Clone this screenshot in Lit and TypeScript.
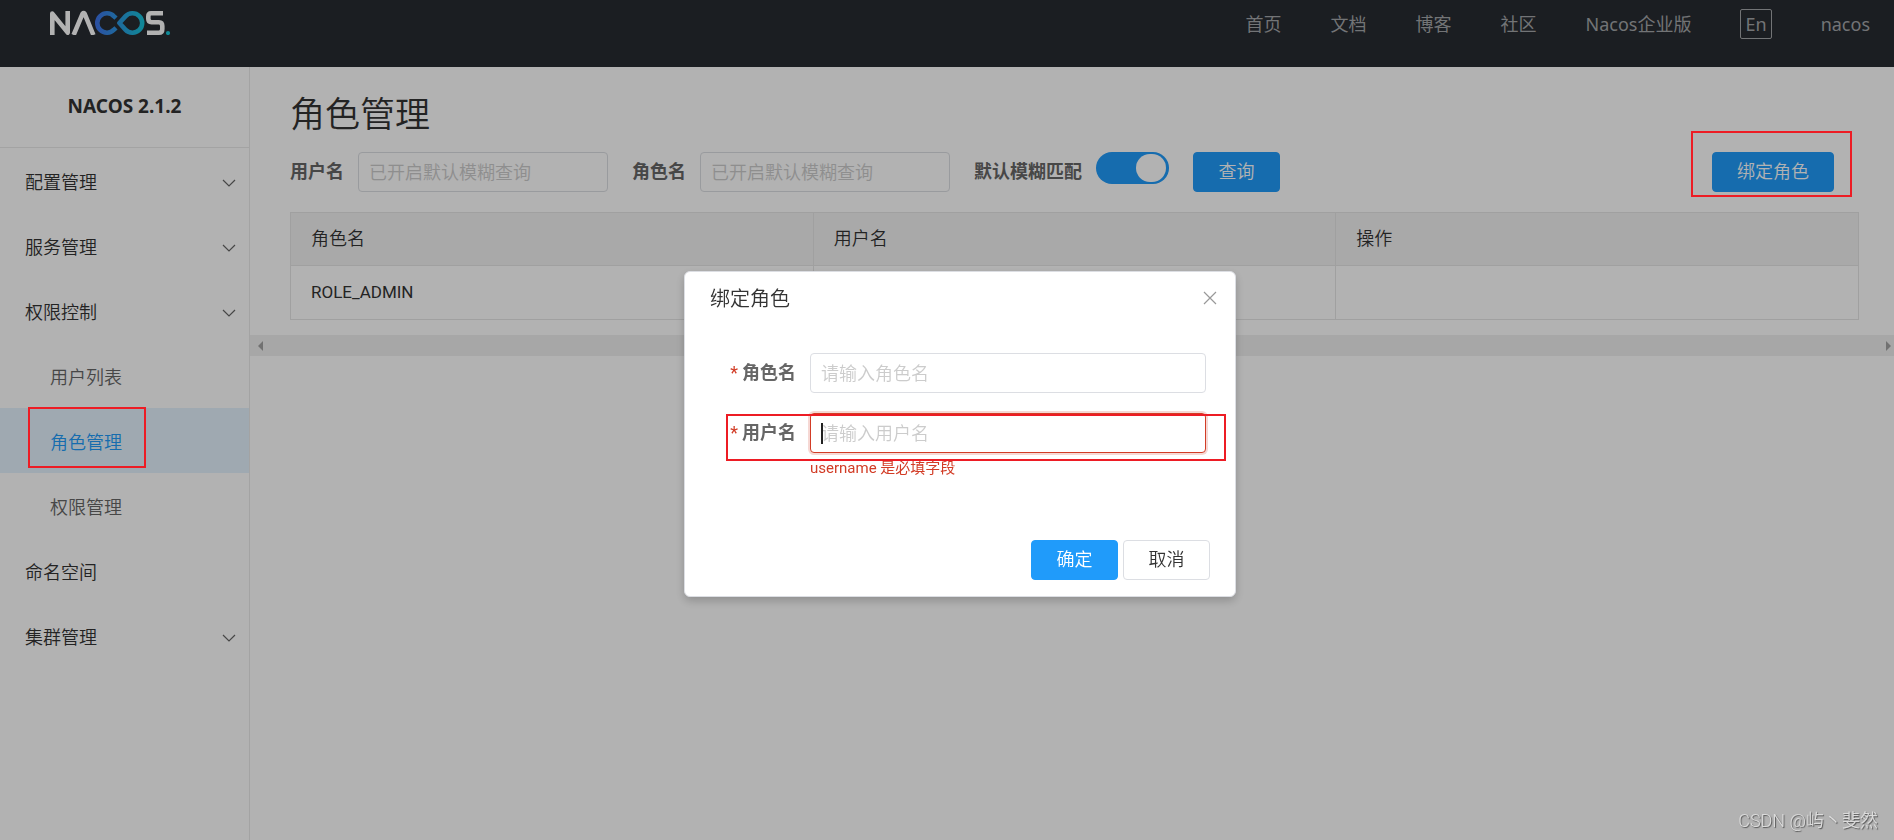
import { LitElement, html, css, svg, nothing } from "lit";
import { customElement, state } from "lit/decorators.js";

interface MenuItem {
  label: string;
  expandable?: boolean;
  children?: { label: string; active?: boolean }[];
}

const MENU: MenuItem[] = [
  { label: "配置管理", expandable: true },
  { label: "服务管理", expandable: true },
  {
    label: "权限控制",
    expandable: true,
    children: [
      { label: "用户列表" },
      { label: "角色管理", active: true },
      { label: "权限管理" },
    ],
  },
  { label: "命名空间" },
  { label: "集群管理", expandable: true },
];

const LINKS = ["首页", "文档", "博客", "社区", "Nacos企业版"];

const chevron = svg`<path d="M1 1 L7 7 L13 1" fill="none" stroke="currentColor" stroke-width="1.2"/>`;

@customElement("app-root")
export class AppRoot extends LitElement {
  @state() private fuzzy = true;

  static styles = css`
    :host {
      display: block;
      font-family: Roboto, "Noto Sans CJK SC", sans-serif;
      font-size: 18px;
      font-weight: 350;
      line-height: 24px;
      color: #333;
    }
    * {
      box-sizing: border-box;
    }
    button,
    input {
      font: inherit;
      color: inherit;
    }
    a {
      color: inherit;
      text-decoration: none;
    }
    .page {
      display: flex;
      flex-direction: column;
      min-height: 100vh;
      background: #fff;
    }

    .header {
      display: flex;
      justify-content: space-between;
      align-items: flex-start;
      height: 67px;
      padding: 9px 24px 0 50px;
      background: #272b31;
    }
    .logo {
      display: block;
      width: 121px;
      height: 26px;
    }
    .nav {
      display: flex;
      align-items: center;
      gap: 49px;
      color: #a4a6a9;
      font-family: "Noto Sans", "Noto Sans CJK SC", sans-serif;
      font-weight: 400;
    }
    .lang {
      height: 30px;
      padding: 0 4px;
      border: 1px solid #a4a6a9;
      border-radius: 2px;
      background: none;
      line-height: 24px;
    }

    .body {
      display: flex;
      flex: 1;
    }
    .side {
      flex: none;
      width: 250px;
      border-right: 1px solid #eaeaea;
    }
    .version {
      margin: 0;
      height: 81px;
      padding-top: 26px;
      border-bottom: 1px solid #eaeaea;
      font: 700 19px/27px "Noto Sans", sans-serif;
      text-align: center;
    }
    .menu {
      list-style: none;
      margin: 0;
      padding: 0;
    }
    .item {
      position: relative;
      display: flex;
      align-items: center;
      justify-content: space-between;
      height: 65px;
      padding: 4px 13px 0 25px;
    }
    .item.sub {
      padding-left: 50px;
      color: #666;
    }
    .item.active {
      background: #e4f3fe;
      color: #209bfa;
    }
    .chevron {
      width: 14px;
      height: 8px;
      color: #666;
    }

    .main {
      flex: 1;
      min-width: 0;
    }
    .content {
      padding: 24px 35px 15px 40px;
    }
    .title {
      margin: 0;
      font-size: 35px;
      font-weight: 350;
      line-height: 50px;
    }
    .filters {
      display: flex;
      align-items: flex-start;
      margin: 11px 0 20px;
    }
    .label {
      font-weight: 700;
      line-height: 40px;
      color: #666;
    }
    .input {
      width: 250px;
      height: 40px;
      padding: 0 10px;
      border: 1px solid #dcdee3;
      border-radius: 4px;
      background: #fff;
      outline: none;
    }
    .input::placeholder {
      color: #ccc;
      opacity: 1;
    }
    .field {
      display: flex;
      gap: 14px;
      margin-right: 24px;
    }
    .switch {
      appearance: none;
      display: flex;
      width: 73px;
      height: 32px;
      margin: 0;
      padding: 2px 3px;
      border-radius: 16px;
      background: #ccc;
    }
    .switch:checked {
      justify-content: flex-end;
      background: #209bfa;
    }
    .switch::before {
      content: "";
      width: 30px;
      height: 28px;
      border-radius: 15px;
      background: #fff;
    }
    .btn {
      min-width: 87px;
      height: 40px;
      padding: 0 24px;
      border: 1px solid #dcdee3;
      border-radius: 4px;
      background: #fff;
      line-height: 24px;
    }
    .btn.primary {
      border-color: #209bfa;
      background: #209bfa;
      color: #fff;
    }
    .anchor {
      position: relative;
      display: flex;
      margin: 0 25px 0 auto;
    }

    .table {
      width: 100%;
      table-layout: fixed;
      border-collapse: collapse;
    }
    .table th,
    .table td {
      height: 54px;
      padding: 0 20px 2px;
      border: 1px solid #e6e6e6;
      font-size: 17px;
      font-weight: 400;
      text-align: left;
    }
    .table th {
      height: 53px;
      padding-bottom: 0;
      background: #f3f3f3;
      font-size: 18px;
      font-weight: 350;
    }
    .scroll {
      display: flex;
      justify-content: space-between;
      align-items: center;
      height: 21px;
      padding: 0 3px 0 8px;
      background: #f0f0f0;
    }
    .arrow {
      width: 5px;
      height: 10px;
      fill: #a3a3a3;
    }

    .mask {
      position: fixed;
      inset: 0;
      display: flex;
      align-items: center;
      justify-content: center;
      padding: 28px 0 0 26px;
      background: rgba(0, 0, 0, 0.3);
      z-index: 10;
    }
    .dialog {
      width: 552px;
      border: 1px solid #dcdee3;
      border-radius: 6px;
      background: #fff;
      box-shadow: 0 4px 10px rgba(0, 0, 0, 0.2);
    }
    .dialog-head {
      display: flex;
      justify-content: space-between;
      padding: 15px 18px 0 25px;
    }
    .dialog-title {
      margin: 0;
      font-size: 20px;
      font-weight: 350;
      line-height: 25px;
    }
    .close {
      width: 14px;
      height: 22px;
      padding: 0;
      border: 0;
      background: none;
      color: #999;
    }
    .close svg {
      display: block;
      width: 14px;
      height: 14px;
    }
    .dialog-form {
      padding: 41px 29px 0 25px;
    }
    .row {
      position: relative;
      display: flex;
      gap: 14px;
      margin-bottom: 20px;
    }
    .row .label {
      width: 86px;
      text-align: right;
    }
    .row .label::before {
      content: "*";
      margin-right: 4px;
      color: #d23c26;
      font-weight: 400;
    }
    .control {
      position: relative;
      flex: 1;
    }
    .control .input {
      display: block;
      width: 100%;
    }
    .input.invalid {
      border-color: #d23c26;
      box-shadow: 0 0 0 2px rgba(210, 60, 38, 0.2);
    }
    .caret {
      position: absolute;
      left: 11px;
      top: 10px;
      width: 2px;
      height: 21px;
      background: #222;
    }
    .error {
      margin-top: 5px;
      font-size: 15px;
      font-weight: 400;
      line-height: 20px;
      color: #d23c26;
    }
    .dialog-foot {
      display: flex;
      justify-content: flex-end;
      gap: 5px;
      padding: 42px 25px 16px;
    }

    .mark {
      position: absolute;
      border: 2px solid #ed1c24;
      pointer-events: none;
      z-index: 20;
    }
    .mark.menu-mark {
      left: 28px;
      top: -1px;
      width: 118px;
      height: 61px;
    }
    .mark.button-mark {
      inset: -21px -18px -5px -21px;
    }
    .mark.row-mark {
      top: 1px;
      left: 16px;
      right: -20px;
      height: 47px;
    }
    .watermark {
      position: fixed;
      right: 16px;
      bottom: 7px;
      color: #dcdcdc;
      text-shadow: 1px 1px 1px #555;
      z-index: 20;
    }
  `;

  private renderLogo() {
    return html`<svg class="logo" viewBox="0 0 121 26" role="img" aria-label="NACOS">
      <defs>
        <linearGradient id="g" gradientUnits="userSpaceOnUse" x1="44" y1="0" x2="95" y2="0">
          <stop offset="0" stop-color="#4070ea" />
          <stop offset="1" stop-color="#16c5d8" />
        </linearGradient>
      </defs>
      <g fill="none" stroke-width="4.6" stroke-linejoin="round">
        <path stroke="#fff" d="M2.3 26V4.6L17.7 23.6V2" />
        <path stroke="#fff" d="M23.6 26L32.6 4.6Q33.6 3.4 34.6 4.6L43.4 26" />
        <path stroke="url(#g)" d="M66 9.2L64 7.3A9.7 9.7 0 1 0 64 20.7L66 18.8" />
        <path stroke="url(#g)" d="M69.4 14L75.4 7.4A9.7 9.7 0 1 1 75.4 20.6Z" />
        <path stroke="#fff" d="M113 4.3H101Q98.3 4.3 98.3 7.5V9.8Q98.3 13.2 101.5 13.2H109Q112.3 13.2 112.3 17V20Q112.3 23.7 109 23.7H97" />
      </g>
      <circle cx="118" cy="24" r="2.1" fill="#16c5d8" />
    </svg>`;
  }

  private renderMenu() {
    return MENU.map(
      (m) => html`<li>
        <a class="item" href="#">
          ${m.label}
          ${m.expandable
            ? html`<svg class="chevron" viewBox="0 0 14 8" aria-hidden="true">${chevron}</svg>`
            : nothing}
        </a>
        ${m.children
          ? html`<ul class="menu">
              ${m.children.map(
                (c) => html`<li>
                  <a class="item sub ${c.active ? "active" : ""}" href="#">
                    ${c.label}${c.active ? html`<span class="mark menu-mark"></span>` : nothing}
                  </a>
                </li>`
              )}
            </ul>`
          : nothing}
      </li>`
    );
  }

  render() {
    return html`
      <div class="page">
        <header class="header">
          ${this.renderLogo()}
          <nav class="nav">
            ${LINKS.map((l) => html`<a href="#">${l}</a>`)}
            <button class="lang">En</button>
            <a href="#">nacos</a>
          </nav>
        </header>
        <div class="body">
          <aside class="side">
            <h2 class="version">NACOS 2.1.2</h2>
            <ul class="menu">
              ${this.renderMenu()}
            </ul>
          </aside>
          <main class="main">
            <div class="content">
              <h1 class="title">角色管理</h1>
              <div class="filters">
                <div class="field">
                  <label class="label" for="user">用户名</label>
                  <input class="input" id="user" placeholder="已开启默认模糊查询" />
                </div>
                <div class="field">
                  <label class="label" for="role">角色名</label>
                  <input class="input" id="role" placeholder="已开启默认模糊查询" />
                </div>
                <div class="field">
                  <label class="label" for="fuzzy">默认模糊匹配</label>
                  <input
                    class="switch"
                    id="fuzzy"
                    type="checkbox"
                    role="switch"
                    .checked=${this.fuzzy}
                    @change=${() => (this.fuzzy = !this.fuzzy)}
                  />
                </div>
                <button class="btn primary">查询</button>
                <div class="anchor">
                  <button class="btn primary">绑定角色</button>
                  <span class="mark button-mark"></span>
                </div>
              </div>
              <table class="table">
                <thead>
                  <tr>
                    <th>角色名</th>
                    <th>用户名</th>
                    <th>操作</th>
                  </tr>
                </thead>
                <tbody>
                  <tr>
                    <td>ROLE_ADMIN</td>
                    <td></td>
                    <td></td>
                  </tr>
                </tbody>
              </table>
            </div>
            <div class="scroll">
              <svg class="arrow" viewBox="0 0 5 10"><path d="M5 0V10L0 5Z" /></svg>
              <svg class="arrow" viewBox="0 0 5 10"><path d="M0 0V10L5 5Z" /></svg>
            </div>
          </main>
        </div>
      </div>

      <div class="mask">
        <section class="dialog" role="dialog" aria-labelledby="dialog-title">
          <div class="dialog-head">
            <h2 class="dialog-title" id="dialog-title">绑定角色</h2>
            <button class="close" aria-label="关闭">
              <svg viewBox="0 0 14 14" fill="none" stroke="currentColor" stroke-width="1.2">
                <path d="M1 1L13 13M13 1L1 13" />
              </svg>
            </button>
          </div>
          <div class="dialog-form">
            <div class="row">
              <label class="label" for="new-role">角色名</label>
              <div class="control">
                <input class="input" id="new-role" placeholder="请输入角色名" />
              </div>
            </div>
            <div class="row">
              <label class="label" for="new-user">用户名</label>
              <div class="control">
                <input class="input invalid" id="new-user" placeholder="请输入用户名" aria-describedby="user-error" />
                <span class="caret"></span>
                <div class="error" id="user-error">username 是必填字段</div>
              </div>
              <span class="mark row-mark"></span>
            </div>
          </div>
          <div class="dialog-foot">
            <button class="btn primary">确定</button>
            <button class="btn">取消</button>
          </div>
        </section>
      </div>
      <div class="watermark">CSDN @屿丶斐然</div>
    `;
  }
}
